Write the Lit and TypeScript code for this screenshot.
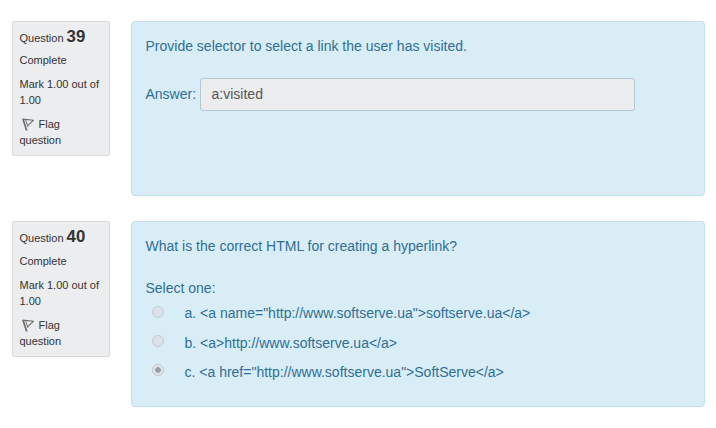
import { LitElement, html, css, svg, nothing } from "lit";
import { customElement, property } from "lit/decorators.js";
import { classMap } from "lit/directives/class-map.js";

interface Choice {
  label: string;
  text: string;
  checked?: boolean;
}

interface Question {
  no: number;
  text: string;
  answer?: string;
  choices?: Choice[];
}

const QUESTIONS: Question[] = [
  {
    no: 39,
    text: "Provide selector to select a link the user has visited.",
    answer: "a:visited",
  },
  {
    no: 40,
    text: "What is the correct HTML for creating a hyperlink?",
    choices: [
      { label: "a.", text: '<a name="http://www.softserve.ua">softserve.ua</a>' },
      { label: "b.", text: "<a>http://www.softserve.ua</a>" },
      { label: "c.", text: '<a href="http://www.softserve.ua">SoftServe</a>', checked: true },
    ],
  },
];

const flagIcon = svg`
  <path d="M1 1 L4.7 12.5" stroke="#6a6a6a" stroke-width="1.7" fill="none"/>
  <path d="M3.4 1.2 L6 9" stroke="#777" stroke-width="1" fill="none"/>
  <path d="M.6 1.1 L11.4 2.3 L5.8 7.4" stroke="#6a6a6a" stroke-width="1.1" fill="none" stroke-linejoin="round"/>`;

@customElement("question-info")
export class QuestionInfo extends LitElement {
  @property({ type: Number }) no = 0;
  @property({ type: Boolean, reflect: true }) roomy = false;

  static styles = css`
    :host {
      display: block;
      box-sizing: border-box;
      width: 98px;
      padding: 5px 7px 7px 6.5px;
      border: 1px solid #d8dadc;
      border-radius: 2px;
      background: #ecedef;
      color: #333;
      font-size: 11px;
      line-height: 16px;
    }
    .title {
      height: 20px;
      line-height: 19px;
      margin-bottom: 5px;
      white-space: nowrap;
    }
    :host([roomy]) .title {
      margin-bottom: 6px;
    }
    .no {
      font-size: 16.8px;
      font-weight: bold;
    }
    .row {
      margin-top: 8px;
    }
    .flag {
      display: inline-block;
      width: 13px;
      height: 13px;
      margin: 0 4px 0 2px;
      vertical-align: -3px;
    }
    .flagging {
      height: 32px;
    }
  `;

  render() {
    return html`
      <div class="title">Question <span class="no">${this.no}</span></div>
      <div>Complete</div>
      <div class="row">Mark 1.00 out of 1.00</div>
      <div class="row flagging"><svg class="flag" viewBox="0 0 13 13">${flagIcon}</svg>Flag question</div>
    `;
  }
}

@customElement("question-body")
export class QuestionBody extends LitElement {
  @property({ attribute: false }) question!: Question;

  static styles = css`
    :host {
      display: block;
      box-sizing: border-box;
      width: 574px;
      padding: 14px 13.5px;
      border: 1px solid #bcdff1;
      border-radius: 4px;
      background: #d9edf6;
      color: #2f6f95;
      font-size: 14px;
      line-height: 20px;
    }
    .answer {
      display: flex;
      align-items: flex-start;
      gap: 4px;
      margin: 22px 0 70px;
    }
    .name {
      padding-top: 6px;
    }
    .field {
      box-sizing: border-box;
      width: 435px;
      height: 33px;
      padding: 5px 10.5px;
      border: 1px solid #b3c6d1;
      border-radius: 3px;
      background: #ecedef;
      color: #555;
    }
    .prompt {
      margin-top: 22px;
    }
    .choices {
      display: grid;
      grid-template-rows: 30px 29px 29px;
      margin: 5px 0 1px;
    }
    .choice {
      display: flex;
      align-items: flex-start;
      padding-left: 6.5px;
    }
    .radio {
      box-sizing: border-box;
      width: 12px;
      height: 12px;
      margin: 3px 20.5px 0 0;
      border: 1px solid #c3cacf;
      border-radius: 50%;
      background: linear-gradient(#dde4e9, #d9e1e7);
    }
    .raised {
      margin-top: 2px;
    }
    .on {
      background: radial-gradient(circle, #999ea1 0 2.4px, #dde3e7 3.3px);
    }
    .text {
      white-space: pre;
    }
  `;

  render() {
    const q = this.question;
    return html`
      <div>${q.text}</div>
      ${q.answer
        ? html`<div class="answer"><span class="name">Answer:</span><div class="field">${q.answer}</div></div>`
        : nothing}
      ${q.choices
        ? html`<div class="prompt">Select one:</div>
            <div class="choices">
              ${q.choices.map(
                (c, i) => html`<div class="choice">
                  <span class=${classMap({ radio: true, raised: i > 0, on: !!c.checked })}></span>
                  <span class="text">${c.label} ${c.text}</span>
                </div>`
              )}
            </div>`
        : nothing}
    `;
  }
}

@customElement("app-root")
export class AppRoot extends LitElement {
  static styles = css`
    :host {
      display: block;
      box-sizing: border-box;
      height: 428px;
      padding: 21px 11px 0 12px;
      background: #fff;
      font-family: "Liberation Sans", Arial, sans-serif;
    }
    .question {
      display: flex;
      align-items: flex-start;
      gap: 21px;
      margin-bottom: 25px;
    }
  `;

  render() {
    return QUESTIONS.map(
      (q) => html`<div class="question">
        <question-info .no=${q.no} ?roomy=${q.no === 40}></question-info>
        <question-body .question=${q}></question-body>
      </div>`
    );
  }
}
